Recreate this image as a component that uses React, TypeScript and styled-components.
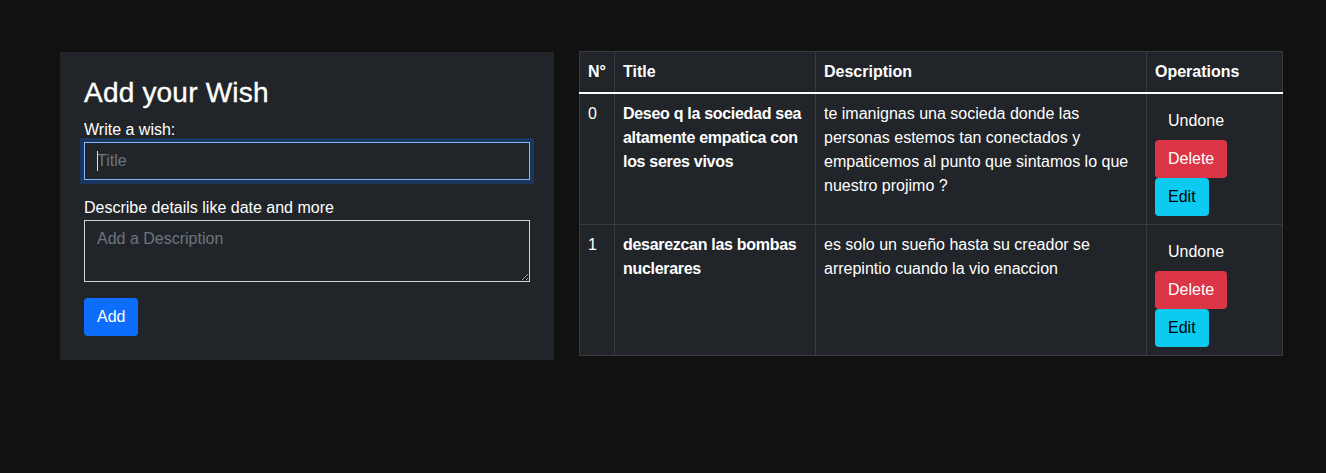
import React from "react";
import styled, { createGlobalStyle } from "styled-components";

const GlobalStyle = createGlobalStyle`
  html, body { margin: 0; padding: 0; }
  body {
    background: #111111;
    color: #dee2e6;
    font-family: "Liberation Sans", Arial, sans-serif;
    font-size: 16px;
    line-height: 1.5;
  }
  * { box-sizing: border-box; }
`;

const Page = styled.main`
  display: flex;
  align-items: flex-start;
  gap: 25px;
  padding: 51px 0 0 60px;
`;

const FormCard = styled.section`
  width: 494px;
  margin-top: 1px;
  background: #212529;
  padding: 24px;
  display: flex;
  flex-direction: column;
`;

const Heading = styled.h3`
  margin: 0 0 8px;
  font-size: 28px;
  font-weight: 500;
  line-height: 1.2;
  color: #ffffff;
  -webkit-text-stroke: 0.35px #ffffff;
  letter-spacing: 0.2px;
`;

const Label = styled.label`
  display: block;
  color: #ffffff;
`;

const Field = styled.div<{ $mb?: number }>`
  display: flex;
  flex-direction: column;
  margin-bottom: ${(p) => p.$mb ?? 16}px;
  position: relative;
`;

const TextInput = styled.input<{ $focused?: boolean }>`
  display: block;
  width: 100%;
  height: 38px;
  padding: 6px 12px;
  font: inherit;
  color: #ffffff;
  background: #212529;
  border: 1px solid ${(p) => (p.$focused ? "#86b7fe" : "#ced4da")};
  border-radius: 0;
  outline: none;
  box-shadow: ${(p) => (p.$focused ? "0 0 0 4px rgba(13, 110, 253, 0.25)" : "none")};
  &::placeholder { color: #6c757d; }
`;

const Caret = styled.span`
  position: absolute;
  left: 13px;
  bottom: 9px;
  width: 1px;
  height: 20px;
  background: #dee2e6;
`;

const TextArea = styled.textarea`
  display: block;
  width: 100%;
  height: 62px;
  padding: 6px 12px;
  font: inherit;
  color: #ffffff;
  background: #212529;
  border: 1px solid #ced4da;
  border-radius: 0;
  outline: none;
  resize: vertical;
  &::placeholder { color: #6c757d; }
`;

const Button = styled.button<{ $variant?: "primary" | "danger" | "info" | "plain" }>`
  display: inline-block;
  align-self: flex-start;
  padding: 6px 12px;
  font: inherit;
  line-height: 24px;
  border: 1px solid transparent;
  border-radius: 4px;
  cursor: pointer;
  background: ${(p) =>
    p.$variant === "primary"
      ? "#0d6efd"
      : p.$variant === "danger"
      ? "#dc3545"
      : p.$variant === "info"
      ? "#0dcaf0"
      : "transparent"};
  color: ${(p) => (p.$variant === "info" ? "#000000" : "#ffffff")};
`;

const Table = styled.table`
  width: 703px;
  table-layout: fixed;
  border-collapse: collapse;
  background: #212529;
  color: #ffffff;
  border: 1px solid #373b3e;
`;

const Th = styled.th`
  text-align: left;
  font-weight: 700;
  padding: 8px;
  border: 1px solid #373b3e;
  border-bottom: 2px solid #ffffff;
  vertical-align: bottom;
`;

const Td = styled.td<{ $bold?: boolean }>`
  padding: 8px;
  border: 1px solid #373b3e;
  vertical-align: top;
  font-weight: ${(p) => (p.$bold ? 700 : 400)};
  letter-spacing: ${(p) => (p.$bold ? "-0.3px" : "normal")};
`;

const Ops = styled.div`
  display: flex;
  flex-direction: column;
  align-items: flex-start;
`;

const wishes = [
  {
    title: "Deseo q la sociedad sea altamente empatica con los seres vivos",
    description:
      "te imanignas una socieda donde las personas estemos tan conectados y empaticemos al punto que sintamos lo que nuestro projimo ?",
  },
  {
    title: "desarezcan las bombas nuclerares",
    description: "es solo un sueño hasta su creador se arrepintio cuando la vio enaccion",
  },
];

export default function App() {
  return (
    <>
      <GlobalStyle />
      <Page>
        <FormCard>
          <Heading>Add your Wish</Heading>
          <Field>
            <Label htmlFor="title">Write a wish:</Label>
            <TextInput id="title" placeholder="Title" $focused />
            <Caret />
          </Field>
          <Field>
            <Label htmlFor="desc">Describe details like date and more</Label>
            <TextArea id="desc" placeholder="Add a Description" />
          </Field>
          <Button $variant="primary">Add</Button>
        </FormCard>
        <Table>
          <colgroup>
            <col style={{ width: 35 }} />
            <col style={{ width: 201 }} />
            <col style={{ width: 331 }} />
            <col style={{ width: 136 }} />
          </colgroup>
          <thead>
            <tr>
              <Th>N°</Th>
              <Th>Title</Th>
              <Th>Description</Th>
              <Th>Operations</Th>
            </tr>
          </thead>
          <tbody>
            {wishes.map((w, i) => (
              <tr key={i}>
                <Td>{i}</Td>
                <Td $bold>{w.title}</Td>
                <Td>{w.description}</Td>
                <Td>
                  <Ops>
                    <Button $variant="plain">Undone</Button>
                    <Button $variant="danger">Delete</Button>
                    <Button $variant="info">Edit</Button>
                  </Ops>
                </Td>
              </tr>
            ))}
          </tbody>
        </Table>
      </Page>
    </>
  );
}
